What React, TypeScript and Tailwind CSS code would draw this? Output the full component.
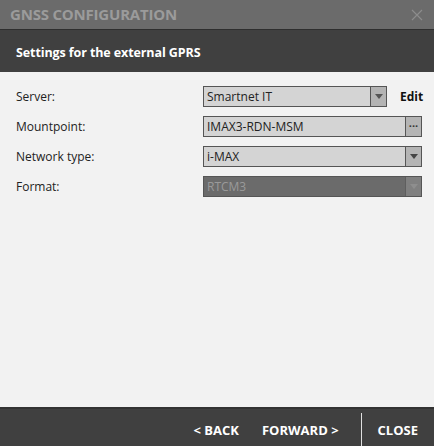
import React from "react";

const font = { fontFamily: '"Segoe UI", "Open Sans", "Noto Sans", sans-serif' };

function Arrow({ color }: { color: string }) {
  return (
    <svg width="8" height="5" viewBox="0 0 8 5">
      <path d="M0 0H8L4 5Z" fill={color} />
    </svg>
  );
}

function Row({ label, children }: { label: string; children: React.ReactNode }) {
  return (
    <div className="flex items-center h-[21px]">
      <div className="w-[187px] text-[12px] text-[#222]">{label}</div>
      {children}
    </div>
  );
}

export default function App() {
  return (
    <div className="w-[434px] h-[446px] flex flex-col bg-[#f2f2f2] overflow-hidden" style={font}>
      <div className="h-[30px] bg-[#6b6b6b] flex items-center justify-between pl-[10px] pr-[11px] border-b border-[#2e2e2e]">
        <span className="text-[15px] font-bold text-[#9b9b9b] tracking-[-0.2px]">GNSS CONFIGURATION</span>
        <svg width="12" height="12" viewBox="0 0 12 12">
          <path d="M1 1L11 11M11 1L1 11" stroke="#8c8c8c" strokeWidth="1.2" />
        </svg>
      </div>
      <div className="h-[42px] bg-[#404040] flex items-center pl-[16px] pt-[4px]">
        <span className="text-[12.5px] font-bold text-white tracking-[-0.1px]">Settings for the external GPRS</span>
      </div>
      <div className="flex-1 flex flex-col gap-[9px] pt-[14px] pl-[16px]">
        <Row label="Server:">
          <div className="w-[184px] h-[21px] flex border border-[#555] bg-[#d4d4d4]">
            <div className="flex-1 pl-[3px] text-[12px] leading-[19px] text-[#222]">Smartnet IT</div>
            <div className="w-[16px] border-l border-[#555] bg-[#b4b4b4] flex items-center justify-center">
              <Arrow color="#555" />
            </div>
          </div>
          <span className="ml-[13px] text-[12px] font-bold text-[#111]">Edit</span>
        </Row>
        <Row label="Mountpoint:">
          <div className="w-[219px] h-[21px] flex border border-[#555] bg-[#d4d4d4]">
            <div className="flex-1 pl-[3px] text-[12px] leading-[19px] text-[#222]">IMAX3-RDN-MSM</div>
            <div className="w-[16px] border-l border-[#555] bg-[#b4b4b4] flex items-center justify-center text-[11px] font-bold leading-none text-[#333] pb-[3px]">
              ···
            </div>
          </div>
        </Row>
        <Row label="Network type:">
          <div className="w-[219px] h-[21px] flex border border-[#555] bg-[#d4d4d4]">
            <div className="flex-1 pl-[3px] text-[12px] leading-[19px] text-[#222]">i-MAX</div>
            <div className="w-[16px] border-l border-[#555] bg-[#b4b4b4] flex items-center justify-center">
              <Arrow color="#444" />
            </div>
          </div>
        </Row>
        <Row label="Format:">
          <div className="w-[219px] h-[21px] flex border border-[#555] bg-[#6b6b6b]">
            <div className="flex-1 pl-[3px] text-[12px] leading-[19px] text-[#9a9a9a]">RTCM3</div>
            <div className="w-[16px] border-l border-[#5e5e5e] bg-[#808080] flex items-center justify-center">
              <Arrow color="#8e8e8e" />
            </div>
          </div>
        </Row>
      </div>
      <div className="h-[39px] bg-[#404040] border-t-2 border-[#333] flex items-center justify-end pt-[6px]">
        <span className="text-[13px] font-bold text-white">&lt; BACK</span>
        <span className="ml-[23px] text-[13px] font-bold text-white">FORWARD &gt;</span>
        <div className="ml-[22px] w-px h-[33px] self-end bg-[#e0e0e0]" />
        <span className="ml-[16px] mr-[16px] text-[13px] font-bold text-white">CLOSE</span>
      </div>
    </div>
  );
}
